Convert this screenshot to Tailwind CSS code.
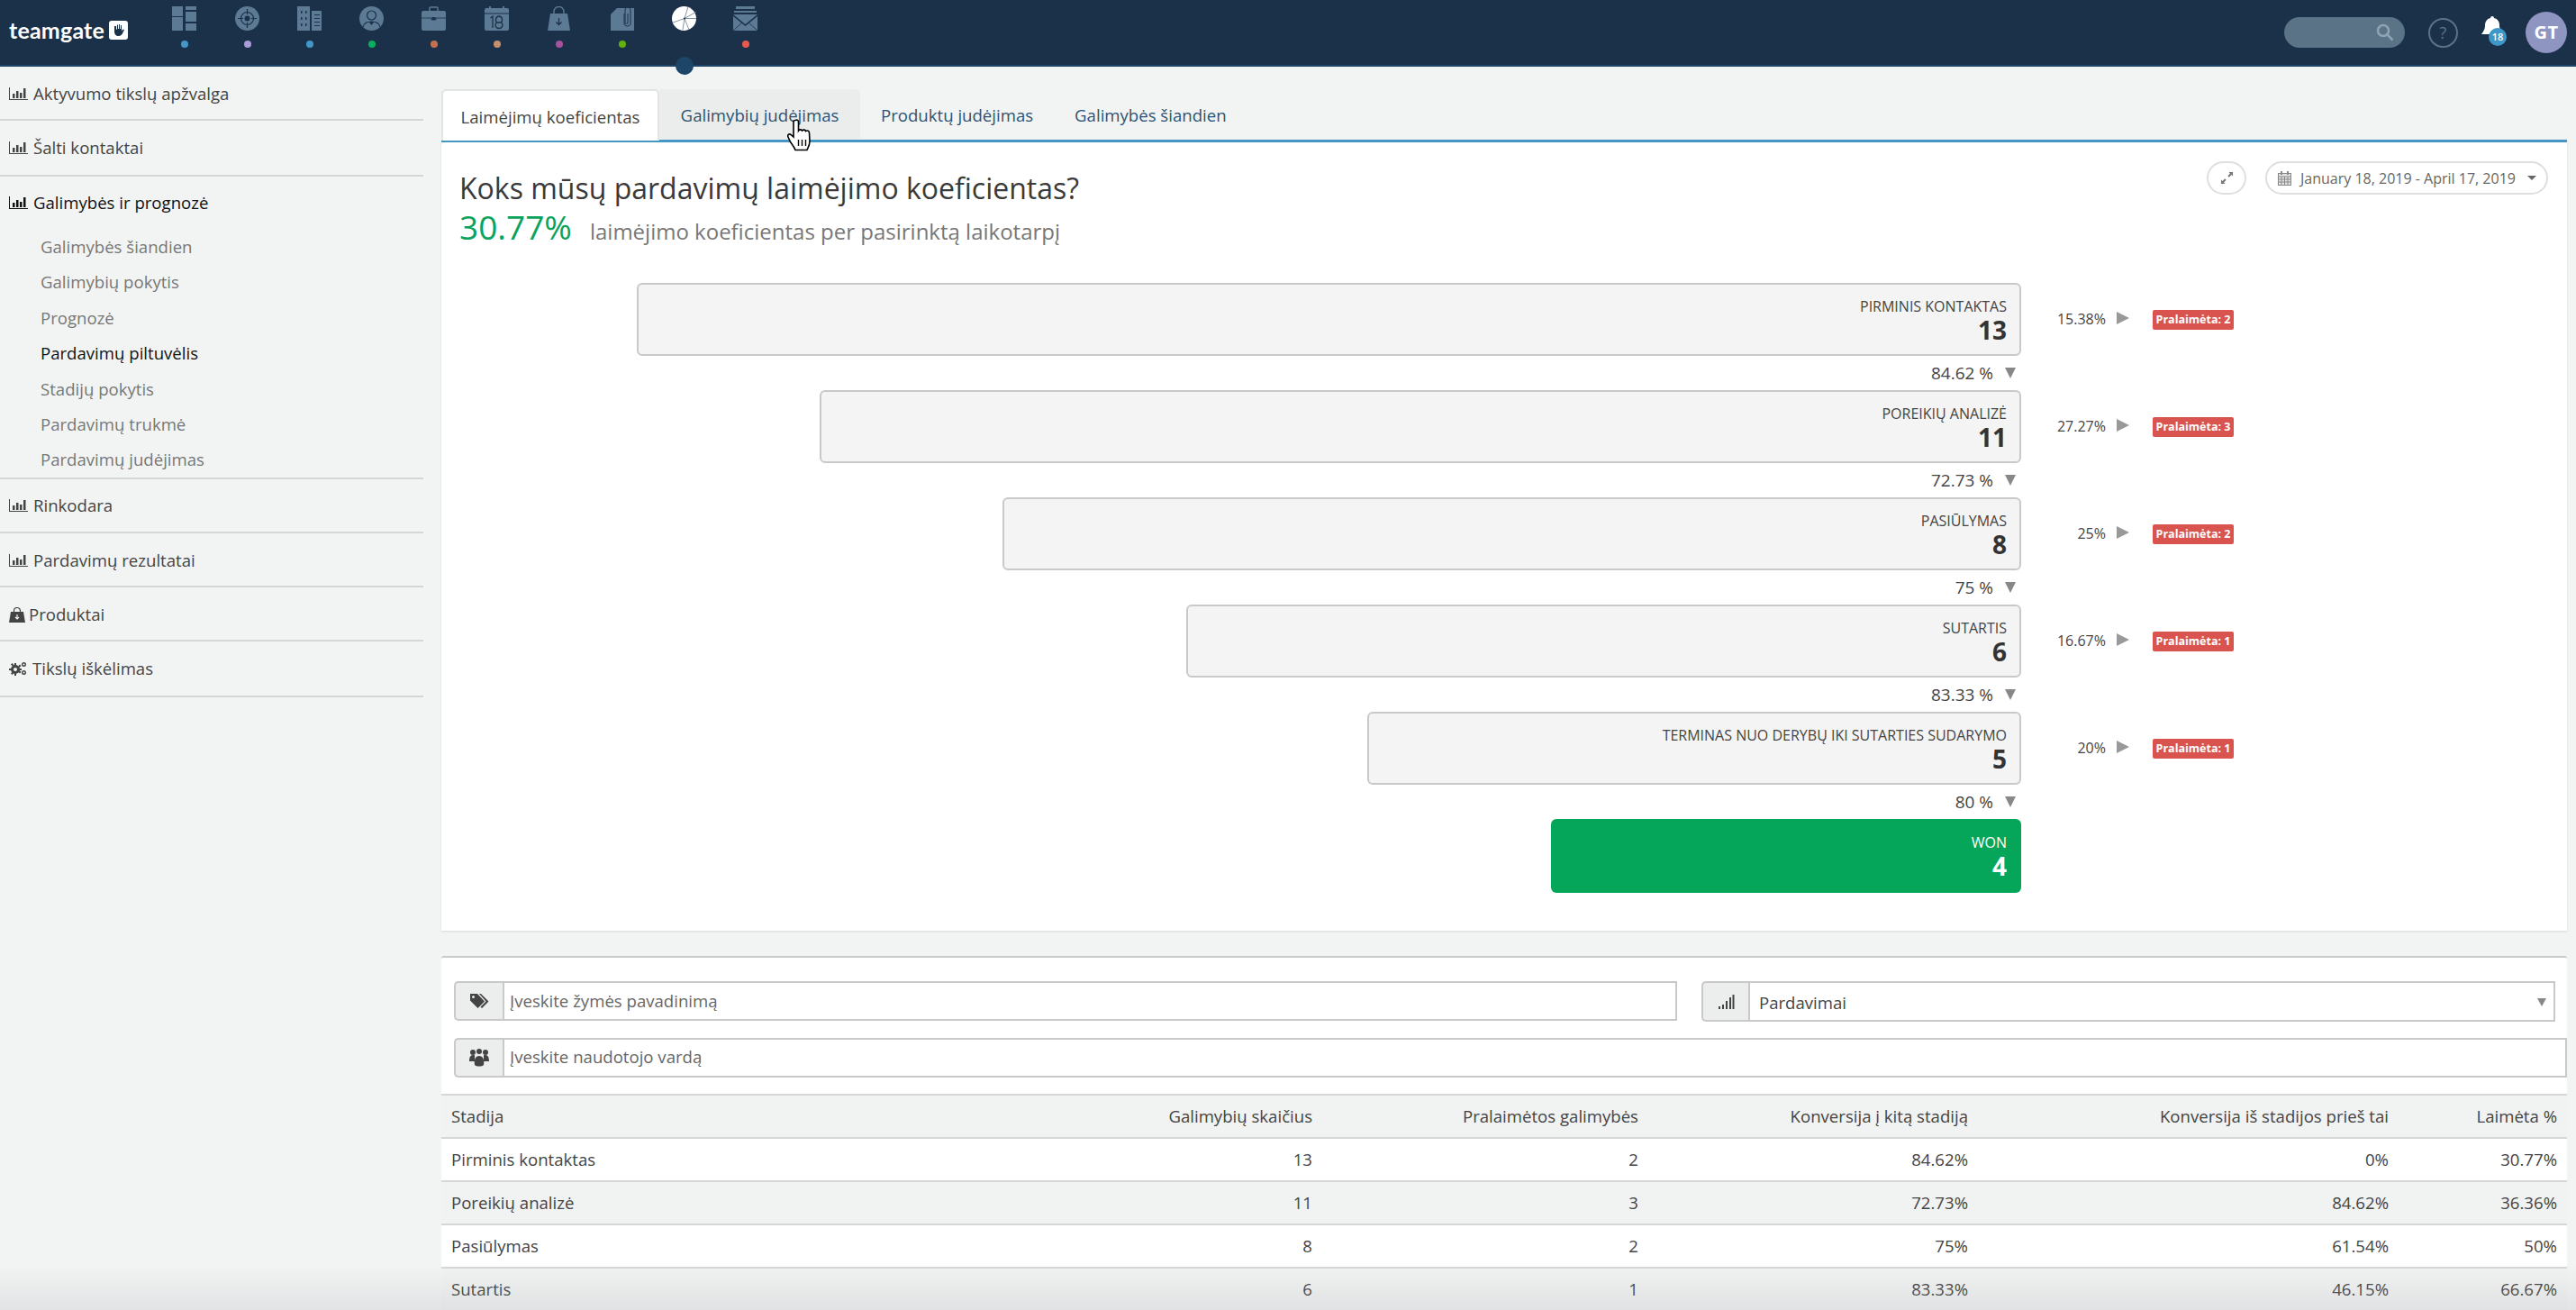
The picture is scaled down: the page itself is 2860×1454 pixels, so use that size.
<!DOCTYPE html>
<html lang="lt">
<head>
<meta charset="utf-8">
<title>Teamgate</title>
<script src="https://cdn.jsdelivr.net/npm/@tailwindcss/browser@4"></script>
</head>
<body class="bg-[#f2f4f4] font-['Open_Sans',sans-serif] text-[#444] overflow-hidden">
<div class="relative w-[2860px] h-[1454px] overflow-hidden">

<!-- header -->
<header class="relative h-[74px] bg-[#1b3049] border-b-2 border-[#1d4568] flex items-start">
  <div class="w-[204px] shrink-0 pl-[10px] pt-[18px] flex items-center gap-[5px]">
    <span class="text-[25px] leading-[30px] font-bold text-white font-['Lato',sans-serif] tracking-[0.2px]">teamgate</span>
    <svg class="w-[21px] h-[21px]" viewBox="0 0 21 21"><rect width="21" height="21" rx="3" fill="#fff"/><path d="M6 6v6c0 3 2 5 4.500 5s4.500-2 5-4l1.500-3-1.500-.500-1.500 2V5h-1v4h-1V4h-1v5h-1V4.500h-1V9.500h-1V6z" fill="#1b3049"/></svg>
  </div>
  <nav class="flex absolute left-0 top-0">
    <div class="absolute left-[191px] top-[7px] w-[27px] flex flex-col items-center">
      <svg class="w-[27px] h-[27px]" viewBox="0 0 27 27" fill="#5c7a94"><rect width="12" height="11"/><rect y="12" width="12" height="15"/><rect x="15" width="12" height="4"/><rect x="15" y="6" width="12" height="11"/><rect x="15" y="19" width="12" height="8"/></svg>
      <span class="mt-[11px] w-2 h-2 rounded-full bg-[#4596cb]"></span>
    </div>
    <div class="absolute left-[261px] top-[7px] w-[27px] flex flex-col items-center">
      <svg class="w-[27px] h-[27px]" viewBox="0 0 27 27"><circle cx="13.500" cy="13.500" r="13.500" fill="#5c7a94"/><circle cx="13.500" cy="13.500" r="7" fill="none" stroke="#1b3049" stroke-width="1.200"/><circle cx="13.500" cy="13.500" r="3" fill="#1b3049"/><path d="M13.500 3v6M13.500 18v6M3 13.500h6M18 13.500h6" stroke="#1b3049" stroke-width="1.200"/></svg>
      <span class="mt-[11px] w-2 h-2 rounded-full bg-[#ab9bd6]"></span>
    </div>
    <div class="absolute left-[330px] top-[7px] w-[27px] flex flex-col items-center">
      <svg class="w-[27px] h-[27px]" viewBox="0 0 27 27" fill="#5c7a94"><path d="M0 0h14v27H0z"/><path d="M16 5h11v22H16z"/><path d="M4 5h1.500v3H4zM9 5h1.500v3H9zM4 12h1.500v3H4zM9 12h1.500v3H9zM4 19h1.500v3H4zM9 19h1.500v3H9zM19 9h6v1h-6zM19 13h6v1h-6zM19 17h6v1h-6zM19 21h6v1h-6z" fill="#1b3049"/></svg>
      <span class="mt-[11px] w-2 h-2 rounded-full bg-[#4596cb]"></span>
    </div>
    <div class="absolute left-[399px] top-[7px] w-[27px] flex flex-col items-center">
      <svg class="w-[27px] h-[27px]" viewBox="0 0 27 27"><circle cx="13.500" cy="13.500" r="13.500" fill="#5c7a94"/><circle cx="13.500" cy="10" r="5" fill="none" stroke="#1b3049" stroke-width="1.200"/><path d="M4 23c1-5 5-6 9.500-6s8.500 1 9.500 6" fill="none" stroke="#1b3049" stroke-width="1.200"/><path d="M10.500 17l3 4 3-4z" fill="#1b3049"/></svg>
      <span class="mt-[11px] w-2 h-2 rounded-full bg-[#0aae5c]"></span>
    </div>
    <div class="absolute left-[468px] top-[7px] w-[27px] flex flex-col items-center">
      <svg class="w-[27px] h-[27px]" viewBox="0 0 27 27"><path d="M9 5V2a1 1 0 0 1 1-1h7a1 1 0 0 1 1 1v3" fill="none" stroke="#5c7a94" stroke-width="1.500"/><rect y="5" width="27" height="22" rx="2" fill="#5c7a94"/><path d="M0 13h11v2h5v-2h11" fill="none" stroke="#1b3049" stroke-width="0.800"/><rect x="11.500" y="12" width="4" height="3" fill="#1b3049"/></svg>
      <span class="mt-[11px] w-2 h-2 rounded-full bg-[#c46f4e]"></span>
    </div>
    <div class="absolute left-[538px] top-[7px] w-[27px] flex flex-col items-center">
      <svg class="w-[27px] h-[27px]" viewBox="0 0 27 27"><path d="M6 0v4M21 0v4" stroke="#5c7a94" stroke-width="2"/><rect y="2" width="27" height="25" rx="2" fill="#5c7a94"/><path d="M0 8h27" stroke="#1b3049"/><path d="M6.500 13l2.500-2v13M14 18c-2.500-1-2-7 2-7s4.500 6 2 7c3 1 2.500 6.500-2 6.500s-5-5.500-2-6.500zM14 18h4" fill="none" stroke="#1b3049" stroke-width="1.300"/></svg>
      <span class="mt-[11px] w-2 h-2 rounded-full bg-[#c68f6c]"></span>
    </div>
    <div class="absolute left-[607px] top-[7px] w-[27px] flex flex-col items-center">
      <svg class="w-[27px] h-[27px]" viewBox="0 0 27 27"><path d="M8 10V6a5.500 5.500 0 0 1 11 0v4" fill="none" stroke="#5c7a94" stroke-width="1.400"/><path d="M4 8h19l3 19H1z" fill="#5c7a94"/><path d="M13.500 13v7M10.500 17.500l3 3 3-3" fill="none" stroke="#1b3049" stroke-width="1.300"/></svg>
      <span class="mt-[11px] w-2 h-2 rounded-full bg-[#a8519c]"></span>
    </div>
    <div class="absolute left-[677px] top-[7px] w-[27px] flex flex-col items-center">
      <svg class="w-[27px] h-[27px]" viewBox="0 0 27 27"><path d="M8 2h19v25H1V9z" fill="#5c7a94"/><path d="M16 8v12a4 4 0 0 0 7 0V4a3 3 0 0 0-6 0v14a1.500 1.500 0 0 0 3 0V8" fill="none" stroke="#1b3049" stroke-width="1"/></svg>
      <span class="mt-[11px] w-2 h-2 rounded-full bg-[#62b10c]"></span>
    </div>
    <div class="absolute left-[746px] top-[7px] w-[27px] flex flex-col items-center">
      <svg class="w-[27px] h-[27px]" viewBox="0 0 27 27"><circle cx="13.500" cy="13.500" r="13.500" fill="#fff"/><path d="M14 13.500L18 .5M14 13.500l12.500-7M14 13.500h13M14 13.500L19 26M14 13.500L1 18M14 13.500L12 26" stroke="#8795a3" stroke-width="1"/><circle cx="14" cy="13.500" r="1" fill="#1b3049"/></svg>
    </div>
    <div class="absolute left-[814px] top-[7px] w-[27px] flex flex-col items-center">
      <svg class="w-[27px] h-[27px]" viewBox="0 0 27 27" fill="#5c7a94"><rect x="3" width="21" height="3"/><rect x="1" y="5" width="25" height="2"/><path d="M0 9h27l-13.500 11zM0 11v16h27V11l-13.500 11z"/><path d="M0 27l10-9M27 27l-10-9" stroke="#1b3049" stroke-width="0.800"/></svg>
      <span class="mt-[11px] w-2 h-2 rounded-full bg-[#e85a4f]"></span>
    </div>
  </nav>
  <div class="absolute left-[750px] top-[63px] w-5 h-5 rounded-full bg-[#1d4568] z-10"></div>
  <div class="ml-auto flex items-center h-[72px] pr-[10px]">
    <div class="w-[134px] h-[34px] rounded-full bg-[#5a7387] flex items-center justify-end pr-[12px] mr-[26px]">
      <svg class="w-[20px] h-[20px]" viewBox="0 0 20 20" fill="none" stroke="#8ea3b3" stroke-width="2.500"><circle cx="8" cy="8" r="6"/><path d="M12.500 12.500l6 6"/></svg>
    </div>
    <div class="w-[33px] h-[33px] rounded-full border-2 border-[#5a7387] text-[#5a7387] text-[18px] leading-[29px] text-center mr-[22px]">?</div>
    <div class="relative w-[40px] h-[46px] mr-[13px]">
      <svg class="absolute left-[4px] top-[5px] w-[24px] h-[24px]" viewBox="0 0 24 24" fill="#fff"><path d="M12 0a2 2 0 0 1 2 2c4 1 6 4 6 8 0 5 2 7 4 10H0c2-3 4-5 4-10 0-4 2-7 6-8a2 2 0 0 1 2-2z"/></svg>
      <span class="absolute left-[12px] top-[18px] w-[20px] h-[20px] rounded-full bg-[#3d97c9] text-white text-[11px] leading-[20px] text-center font-semibold">18</span>
    </div>
    <div class="w-[46px] h-[46px] rounded-full bg-[#8f95c1] text-white text-[20px] font-bold leading-[46px] text-center tracking-[0.5px]">GT</div>
  </div>
</header>

<div class="flex">
  <!-- sidebar -->
  <aside class="w-[470px] shrink-0 text-[18.600px]">
    <div class="h-[60px] border-b-2 border-[#d5d7d7] flex items-center pl-[10px] gap-[6px] pt-[2px]">
      <svg class="w-[21px] h-[14px]" viewBox="0 0 21 14" fill="#444"><path d="M0 0h1v13h20v1H0z"/><rect x="4" y="7" width="2.500" height="5"/><rect x="8" y="4" width="2.500" height="8"/><rect x="12" y="6" width="2.500" height="6"/><rect x="16" y="1" width="2.500" height="11"/></svg>
      <span>Aktyvumo tikslų apžvalga</span>
    </div>
    <div class="h-[62px] border-b-2 border-[#d5d7d7] flex items-center pl-[10px] gap-[6px] pb-[1px]">
      <svg class="w-[21px] h-[14px]" viewBox="0 0 21 14" fill="#444"><path d="M0 0h1v13h20v1H0z"/><rect x="4" y="7" width="2.500" height="5"/><rect x="8" y="4" width="2.500" height="8"/><rect x="12" y="6" width="2.500" height="6"/><rect x="16" y="1" width="2.500" height="11"/></svg>
      <span>Šalti kontaktai</span>
    </div>
    <div class="border-b-2 border-[#d5d7d7] h-[336px]">
      <div class="h-[58px] flex items-center pl-[10px] gap-[6px] text-[#111]">
        <svg class="w-[21px] h-[14px]" viewBox="0 0 21 14" fill="#111"><path d="M0 0h1v13h20v1H0z"/><rect x="4" y="7" width="2.500" height="5"/><rect x="8" y="4" width="2.500" height="8"/><rect x="12" y="6" width="2.500" height="6"/><rect x="16" y="1" width="2.500" height="11"/></svg>
        <span>Galimybės ir prognozė</span>
      </div>
      <ul class="pl-[45px] text-[#777] leading-[39.400px]">
        <li>Galimybės šiandien</li>
        <li>Galimybių pokytis</li>
        <li>Prognozė</li>
        <li class="text-[#111]">Pardavimų piltuvėlis</li>
        <li>Stadijų pokytis</li>
        <li>Pardavimų trukmė</li>
        <li>Pardavimų judėjimas</li>
      </ul>
    </div>
    <div class="h-[60px] border-b-2 border-[#d5d7d7] flex items-center pl-[10px] gap-[6px]">
      <svg class="w-[21px] h-[14px]" viewBox="0 0 21 14" fill="#444"><path d="M0 0h1v13h20v1H0z"/><rect x="4" y="7" width="2.500" height="5"/><rect x="8" y="4" width="2.500" height="8"/><rect x="12" y="6" width="2.500" height="6"/><rect x="16" y="1" width="2.500" height="11"/></svg>
      <span>Rinkodara</span>
    </div>
    <div class="h-[60px] border-b-2 border-[#d5d7d7] flex items-center pl-[10px] gap-[6px] pt-[2px]">
      <svg class="w-[21px] h-[14px]" viewBox="0 0 21 14" fill="#444"><path d="M0 0h1v13h20v1H0z"/><rect x="4" y="7" width="2.500" height="5"/><rect x="8" y="4" width="2.500" height="8"/><rect x="12" y="6" width="2.500" height="6"/><rect x="16" y="1" width="2.500" height="11"/></svg>
      <span>Pardavimų rezultatai</span>
    </div>
    <div class="h-[60px] border-b-2 border-[#d5d7d7] flex items-center pl-[10px] gap-[4px] pt-[2px]">
      <svg class="w-[18px] h-[17px]" viewBox="0 0 18 17" fill="#444"><path d="M5.500 6V4a3.500 3.500 0 0 1 7 0v2" fill="none" stroke="#444" stroke-width="1.200"/><path d="M2 5h14l2 12H0z"/><path d="M9 8v5M7 11l2 2 2-2" fill="none" stroke="#f2f4f4" stroke-width="1.200"/></svg>
      <span>Produktai</span>
    </div>
    <div class="h-[62px] border-b-2 border-[#d5d7d7] flex items-center pl-[10px] gap-[6px]">
      <svg class="w-[20px] h-[16px]" viewBox="0 0 20 16" fill="#444"><circle cx="7" cy="9" r="3.500" fill="none" stroke="#444" stroke-width="3"/><path d="M6 2h2v3H6zM6 13h2v3H6zM0 8h3v2H0zM11 8h3v2h-3zM2 3.500l1.500-1.500 2 2L4 5.500zM10 11.500l1.500-1.500 2 2-1.500 1.500zM2 13.500l2-2 1.500 1.500-2 2zM10 5.500l2-2 1.500 1.500-2 2z"/><circle cx="16.500" cy="3.500" r="1.800" fill="none" stroke="#444" stroke-width="1.400"/><circle cx="16.500" cy="12.500" r="1.800" fill="none" stroke="#444" stroke-width="1.400"/></svg>
      <span>Tikslų iškėlimas</span>
    </div>
  </aside>

  <!-- main -->
  <main class="w-[2360px] ml-[20px] pt-[25px]">
    <!-- tabs -->
    <div class="flex h-[57px] text-[18.600px] text-[#2c5373] leading-[58px]">
      <div class="w-[242px] h-[57px] bg-white rounded-t-[5px] border-2 border-b-0 border-[#e2e4e4] text-center text-[#444] leading-[57px]">Laimėjimų koeficientas</div>
      <div class="w-[223px] h-[55px] bg-[#ebecec] rounded-t-[4px] text-center">Galimybių judėjimas</div>
      <div class="ml-[23px] mr-[46px]">Produktų judėjimas</div>
      <div>Galimybės šiandien</div>
    </div>
    <!-- funnel panel -->
    <section class="h-[878px] bg-white border-t-[3px] border-[#4596c4] shadow-[0_1px_2px_#d9dbdb] px-[20px] pt-[29px] -mt-[1px]">
      <div class="flex justify-between items-start">
        <div>
          <h1 class="text-[32px] leading-[44px] text-[#3a3a3a]">Koks mūsų pardavimų laimėjimo koeficientas?</h1>
          <p class="flex items-baseline gap-[20px] -mt-[3px] leading-[48px]"><span class="text-[37px] text-[#0aa35c]">30.77%</span><span class="text-[24px] text-[#777]">laimėjimo koeficientas per pasirinktą laikotarpį</span></p>
        </div>
        <div class="flex items-center gap-[21px] pr-[1px] text-[16px] text-[#666] -mt-[8px]">
          <div class="w-[44px] h-[37px] rounded-full border-2 border-[#dfdfdf] flex items-center justify-center">
            <svg class="w-[15px] h-[15px]" viewBox="0 0 16 16" fill="#777"><path d="M10 1h5v5l-1.700-1.700-2.800 2.800-1.600-1.600 2.800-2.800zM6 15H1v-5l1.700 1.700 2.800-2.800 1.600 1.600-2.800 2.800z"/></svg>
          </div>
          <div class="w-[314px] h-[37px] rounded-full border-2 border-[#dfdfdf] flex items-center pl-[12px] gap-[10px] whitespace-nowrap">
            <svg class="w-[15px] h-[16px] shrink-0" viewBox="0 0 15 16" fill="none" stroke="#888"><rect x=".5" y="2.500" width="14" height="13" fill="#e4e4e4"/><path d="M.5 6h14M.5 9h14M.5 12h14M4 6v9M7.500 6v9M11 6v9"/><path d="M4 0v4M11 0v4" stroke-width="2"/></svg>
            <span>January 18, 2019 - April 17, 2019</span>
            <span class="ml-[3px] w-0 h-0 border-x-[5px] border-x-transparent border-t-[5px] border-t-[#666]"></span>
          </div>
        </div>
      </div>

      <!-- funnel -->
      <div class="mt-[33px]">
        <div class="flex items-center h-[81px]">
          <div class="w-[1734px] shrink-0 flex justify-end"><div class="w-[1537px] h-[81px] bg-[#f4f4f4] border-2 border-[#c9c9c9] rounded-[6px] px-[14px] pt-[11px] text-right text-[#444]"><div class="text-[16px] leading-[27px]">PIRMINIS KONTAKTAS</div><div class="text-[28px] leading-[25px] font-bold text-[#333]">13</div></div></div>
          <div class="w-[94px] shrink-0 text-right text-[16px] -mt-[2px]">15.38%</div>
          <span class="ml-[12px] -mt-[3px] w-0 h-0 border-y-[7px] border-y-transparent border-l-[14px] border-l-[#999]"></span>
          <span class="ml-[26px] w-[90px] h-[22px] rounded-[2px] bg-[#d9534f] text-white text-[12.500px] leading-[22px] font-bold text-center whitespace-nowrap">Pralaimėta: 2</span>
        </div>
        <div class="w-[1734px] h-[38px] flex justify-end items-center pr-[6px] text-[19px]">84.62 %<span class="ml-[13px] w-0 h-0 border-x-[6px] border-x-transparent border-t-[12px] border-t-[#888]"></span></div>
        <div class="flex items-center h-[81px]">
          <div class="w-[1734px] shrink-0 flex justify-end"><div class="w-[1334px] h-[81px] bg-[#f4f4f4] border-2 border-[#c9c9c9] rounded-[6px] px-[14px] pt-[11px] text-right text-[#444]"><div class="text-[16px] leading-[27px]">POREIKIŲ ANALIZĖ</div><div class="text-[28px] leading-[25px] font-bold text-[#333]">11</div></div></div>
          <div class="w-[94px] shrink-0 text-right text-[16px] -mt-[2px]">27.27%</div>
          <span class="ml-[12px] -mt-[3px] w-0 h-0 border-y-[7px] border-y-transparent border-l-[14px] border-l-[#999]"></span>
          <span class="ml-[26px] w-[90px] h-[22px] rounded-[2px] bg-[#d9534f] text-white text-[12.500px] leading-[22px] font-bold text-center whitespace-nowrap">Pralaimėta: 3</span>
        </div>
        <div class="w-[1734px] h-[38px] flex justify-end items-center pr-[6px] text-[19px]">72.73 %<span class="ml-[13px] w-0 h-0 border-x-[6px] border-x-transparent border-t-[12px] border-t-[#888]"></span></div>
        <div class="flex items-center h-[81px]">
          <div class="w-[1734px] shrink-0 flex justify-end"><div class="w-[1131px] h-[81px] bg-[#f4f4f4] border-2 border-[#c9c9c9] rounded-[6px] px-[14px] pt-[11px] text-right text-[#444]"><div class="text-[16px] leading-[27px]">PASIŪLYMAS</div><div class="text-[28px] leading-[25px] font-bold text-[#333]">8</div></div></div>
          <div class="w-[94px] shrink-0 text-right text-[16px] -mt-[2px]">25%</div>
          <span class="ml-[12px] -mt-[3px] w-0 h-0 border-y-[7px] border-y-transparent border-l-[14px] border-l-[#999]"></span>
          <span class="ml-[26px] w-[90px] h-[22px] rounded-[2px] bg-[#d9534f] text-white text-[12.500px] leading-[22px] font-bold text-center whitespace-nowrap">Pralaimėta: 2</span>
        </div>
        <div class="w-[1734px] h-[38px] flex justify-end items-center pr-[6px] text-[19px]">75 %<span class="ml-[13px] w-0 h-0 border-x-[6px] border-x-transparent border-t-[12px] border-t-[#888]"></span></div>
        <div class="flex items-center h-[81px]">
          <div class="w-[1734px] shrink-0 flex justify-end"><div class="w-[927px] h-[81px] bg-[#f4f4f4] border-2 border-[#c9c9c9] rounded-[6px] px-[14px] pt-[11px] text-right text-[#444]"><div class="text-[16px] leading-[27px]">SUTARTIS</div><div class="text-[28px] leading-[25px] font-bold text-[#333]">6</div></div></div>
          <div class="w-[94px] shrink-0 text-right text-[16px] -mt-[2px]">16.67%</div>
          <span class="ml-[12px] -mt-[3px] w-0 h-0 border-y-[7px] border-y-transparent border-l-[14px] border-l-[#999]"></span>
          <span class="ml-[26px] w-[90px] h-[22px] rounded-[2px] bg-[#d9534f] text-white text-[12.500px] leading-[22px] font-bold text-center whitespace-nowrap">Pralaimėta: 1</span>
        </div>
        <div class="w-[1734px] h-[38px] flex justify-end items-center pr-[6px] text-[19px]">83.33 %<span class="ml-[13px] w-0 h-0 border-x-[6px] border-x-transparent border-t-[12px] border-t-[#888]"></span></div>
        <div class="flex items-center h-[81px]">
          <div class="w-[1734px] shrink-0 flex justify-end"><div class="w-[726px] h-[81px] bg-[#f4f4f4] border-2 border-[#c9c9c9] rounded-[6px] px-[14px] pt-[11px] text-right text-[#444]"><div class="text-[16px] leading-[27px]">TERMINAS NUO DERYBŲ IKI SUTARTIES SUDARYMO</div><div class="text-[28px] leading-[25px] font-bold text-[#333]">5</div></div></div>
          <div class="w-[94px] shrink-0 text-right text-[16px] -mt-[2px]">20%</div>
          <span class="ml-[12px] -mt-[3px] w-0 h-0 border-y-[7px] border-y-transparent border-l-[14px] border-l-[#999]"></span>
          <span class="ml-[26px] w-[90px] h-[22px] rounded-[2px] bg-[#d9534f] text-white text-[12.500px] leading-[22px] font-bold text-center whitespace-nowrap">Pralaimėta: 1</span>
        </div>
        <div class="w-[1734px] h-[38px] flex justify-end items-center pr-[6px] text-[19px]">80 %<span class="ml-[13px] w-0 h-0 border-x-[6px] border-x-transparent border-t-[12px] border-t-[#888]"></span></div>
        <div class="flex items-center h-[82px]">
          <div class="w-[1734px] shrink-0 flex justify-end"><div class="w-[522px] h-[82px] bg-[#06a65a] rounded-[6px] px-[16px] pt-[13px] text-right text-white"><div class="text-[16px] leading-[27px]">WON</div><div class="text-[28px] leading-[25px] font-bold">4</div></div></div>
        </div>
      </div>
    </section>

    <!-- filters + table -->
    <section class="mt-[28px] bg-white border-t-2 border-[#c9cbcb] rounded-t-[3px] h-[400px] text-[18.600px]">
      <div class="flex pl-[14px] pt-[26px] h-[64px]">
        <div class="flex w-[1358px] h-[44px]">
          <div class="w-[54px] bg-[#eceded] border-2 border-r-0 border-[#c9c9c9] rounded-l-[5px] flex items-center justify-center">
            <svg class="w-[21px] h-[17px]" viewBox="0 0 21 17" fill="#444"><path d="M0 0h8l8 8.500L8.500 16 0 7.500z"/><path d="M10 0h2l8.500 8.500L13 16l-1.500-1.500 6-6z"/><circle cx="3.500" cy="3.500" r="1.500" fill="#eceded"/></svg>
          </div>
          <div class="flex-1 border-2 border-[#c9c9c9] pl-[6px] leading-[39px] text-[#666]">Įveskite žymės pavadinimą</div>
        </div>
        <div class="flex w-[948px] h-[45px] ml-[27px]">
          <div class="w-[52px] bg-[#eceded] border-2 border-r-0 border-[#c9c9c9] rounded-l-[5px] flex items-center justify-center">
            <svg class="w-[20px] h-[16px]" viewBox="0 0 20 16" fill="#444"><rect x="2" y="13" width="2" height="3"/><rect x="6" y="11" width="2" height="5"/><rect x="10" y="7" width="2" height="9"/><rect x="14" y="3" width="2" height="13"/><rect x="17.500" y="0" width="2" height="16"/></svg>
          </div>
          <div class="flex-1 border-2 border-[#c9c9c9] pl-[10px] pt-[2px] text-[#444] flex justify-between items-center pr-[8px]">Pardavimai<span class="w-0 h-0 border-x-[5px] border-x-transparent border-t-[9px] border-t-[#888]"></span></div>
        </div>
      </div>
      <div class="flex pl-[14px] mt-[25px]">
        <div class="w-[54px] h-[44px] bg-[#eceded] border-2 border-r-0 border-[#c9c9c9] rounded-l-[5px] flex items-center justify-center">
          <svg class="w-[22px] h-[20px]" viewBox="0 0 22 20" fill="#444"><circle cx="4" cy="4" r="3"/><circle cx="11" cy="3" r="3"/><circle cx="18" cy="4" r="3"/><path d="M0 14c0-4 1-7 4-7h2v7zM22 14c0-4-1-7-4-7h-2v7z"/><path d="M6 18c-1-6 1-10 5-10s6 4 5 10c-2 2-8 2-10 0z"/></svg>
        </div>
        <div class="flex-1 h-[44px] border-2 border-[#c9c9c9] pl-[6px] leading-[37px] text-[#666]">Įveskite naudotojo vardą</div>
      </div>
      <div class="mt-[18px] text-[#444]">
        <div class="grid grid-cols-[610px_368px_362px_366px_467px_187px] h-[48px] items-center bg-[#f1f2f2] border-t-2 border-[#d5d7d7] text-right [&>*]:pr-[11px]"><span class="text-left pl-[11px]">Stadija</span><span>Galimybių skaičius</span><span>Pralaimėtos galimybės</span><span>Konversija į kitą stadiją</span><span>Konversija iš stadijos prieš tai</span><span>Laimėta %</span></div>
        <div class="grid grid-cols-[610px_368px_362px_366px_467px_187px] h-[48px] items-center bg-white border-t-2 border-[#d5d7d7] text-right [&>*]:pr-[11px]"><span class="text-left pl-[11px]">Pirminis kontaktas</span><span>13</span><span>2</span><span>84.62%</span><span>0%</span><span>30.77%</span></div>
        <div class="grid grid-cols-[610px_368px_362px_366px_467px_187px] h-[48px] items-center bg-[#f1f2f2] border-t-2 border-[#d5d7d7] text-right [&>*]:pr-[11px]"><span class="text-left pl-[11px]">Poreikių analizė</span><span>11</span><span>3</span><span>72.73%</span><span>84.62%</span><span>36.36%</span></div>
        <div class="grid grid-cols-[610px_368px_362px_366px_467px_187px] h-[48px] items-center bg-white border-t-2 border-[#d5d7d7] text-right [&>*]:pr-[11px]"><span class="text-left pl-[11px]">Pasiūlymas</span><span>8</span><span>2</span><span>75%</span><span>61.54%</span><span>50%</span></div>
        <div class="grid grid-cols-[610px_368px_362px_366px_467px_187px] h-[48px] items-center bg-[#f1f2f2] border-t-2 border-[#d5d7d7] text-right [&>*]:pr-[11px]"><span class="text-left pl-[11px]">Sutartis</span><span>6</span><span>1</span><span>83.33%</span><span>46.15%</span><span>66.67%</span></div>
      </div>
    </section>
  </main>
</div>

<!-- bottom fade -->
<div class="absolute inset-x-0 bottom-0 h-[50px] bg-gradient-to-b from-transparent to-[#9fa3a6]/20 pointer-events-none"></div>
<!-- cursor -->
<svg class="absolute left-[874px] top-[132px] w-[31px] h-[36px]" viewBox="0 0 31 36"><path d="M9 1.500c2-1 3.500 0 3.500 2V13c1-1.500 3-1.500 4 0 1.500-1.500 3.500-1 4 .5 2-1 4-.5 4 2l.5 9c0 5-2 7.500-3 10H9c-1-3-3-5-5.500-9L1 20c-1-2 1-4 3-2.500L7 20V3.500c0-1 1-2 2-2z" fill="#fff" stroke="#000" stroke-width="1.600"/><path d="M12.500 23v7M16.500 23v7M20.500 23v7" stroke="#000" stroke-width="1.400"/></svg>
</div>
</body>
</html>
